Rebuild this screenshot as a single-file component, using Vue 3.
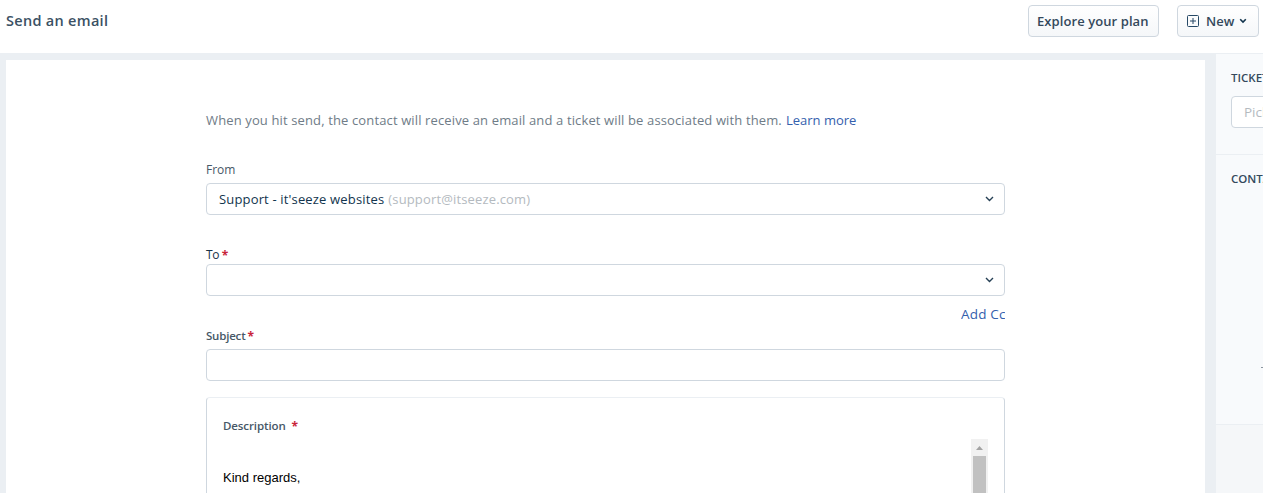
<template>
  <div class="page">
    <!-- Top bar -->
    <header class="topbar">
      <h1 class="topbar-title">Send an email</h1>
      <div class="topbar-actions">
        <button type="button" class="btn btn-plan"><span>Explore your plan</span></button>
        <button type="button" class="btn btn-new">
          <svg class="icon-plus" width="12" height="12" viewBox="0 0 12 12">
            <rect x="0.5" y="0.5" width="11" height="11" rx="1" />
            <path d="M6 3v6M3 6h6" />
          </svg>
          <span class="btn-new-text">New</span>
          <svg class="icon-caret" width="8" height="6" viewBox="0 0 8 6">
            <path d="M1.2 1.2L4 4l2.8-2.8" />
          </svg>
        </button>
      </div>
    </header>

    <div class="workspace">
      <!-- Email form -->
      <main class="panel">
        <form class="form" @submit.prevent>
          <p class="hint">
            <span class="hint-text">When you hit send, the contact will receive an email and a ticket will be associated with them.</span>
            <a class="link">Learn more</a>
          </p>

          <label class="label label-from">From</label>
          <div class="field field-from">
            <span class="sender">{{ sender.name }}</span>
            <span class="address">({{ sender.email }})</span>
            <svg class="icon-chevron" width="9" height="6" viewBox="0 0 9 6">
              <path d="M1 1l3.5 3.5L8 1" />
            </svg>
          </div>

          <label class="label label-to">To <b class="required">*</b></label>
          <div class="field">
            <input v-model="to" type="text" class="field-input" />
            <svg class="icon-chevron" width="9" height="6" viewBox="0 0 9 6">
              <path d="M1 1l3.5 3.5L8 1" />
            </svg>
          </div>
          <div class="add-cc"><a class="link">Add Cc</a></div>

          <label class="label label-subject">Subject<b class="required">*</b></label>
          <div class="field">
            <input v-model="subject" type="text" class="field-input" />
          </div>

          <div class="editor">
            <div class="label label-description">Description <b class="required">*</b></div>
            <div class="editor-area">
              <div class="editor-body">Kind regards,</div>
              <div class="scrollbar">
                <svg class="scroll-up" width="17" height="17" viewBox="0 0 17 17">
                  <path d="M5 11l3.5-4 3.5 4z" />
                </svg>
                <div class="scroll-thumb"></div>
              </div>
            </div>
          </div>
        </form>
      </main>

      <!-- Ticket sidebar -->
      <aside class="sidebar">
        <section class="side-section side-template">
          <h2 class="side-title">TICKET</h2>
          <div class="side-select">Pick</div>
        </section>
        <section class="side-section side-contact">
          <h2 class="side-title">CONTACT</h2>
          <div class="side-dash"></div>
        </section>
        <section class="side-rest"></section>
      </aside>
    </div>
  </div>
</template>

<script setup>
import { ref } from 'vue'

const sender = {
  name: "Support - it'seeze websites",
  email: 'support@itseeze.com'
}

const to = ref('')
const subject = ref('')
</script>

<style>
body {
  margin: 0;
  overflow: hidden;
}
</style>

<style scoped>
.page {
  display: flex;
  flex-direction: column;
  width: 1263px;
  height: 493px;
  overflow: hidden;
  background: #fff;
  color: #183247;
  font-family: "Open Sans", "Noto Sans", sans-serif;
  font-size: 13px;
  line-height: 20px;
}

.page *,
.page {
  box-sizing: border-box;
}

/* Top bar */
.topbar {
  display: flex;
  flex: none;
  justify-content: space-between;
  height: 53px;
  padding: 5px 4px 0 6px;
}

.topbar-title {
  margin: 6px 0 0;
  font-size: 14.5px;
  font-weight: 600;
  line-height: 20px;
  letter-spacing: 0.3px;
  color: #3b5164;
}

.topbar-actions {
  display: flex;
  gap: 18px;
}

.btn {
  display: flex;
  align-items: center;
  height: 32px;
  padding: 0 9px 1px;
  border: 1px solid #cfd7df;
  border-radius: 4px;
  background: linear-gradient(#fff, #f5f7f9);
  color: #34495c;
  font-family: inherit;
  font-size: 13px;
  font-weight: 600;
  line-height: 20px;
  letter-spacing: 0.08px;
  white-space: nowrap;
}

.btn-plan {
  width: 131px;
  padding-left: 8px;
}

.btn-new {
  width: 82px;
}

.btn-new-text {
  width: 29px;
  text-align: left;
}

.icon-plus {
  flex: none;
  margin-right: 7px;
  fill: none;
  stroke: #264966;
  stroke-width: 1;
}

.icon-caret {
  flex: none;
  margin-left: 4px;
  fill: none;
  stroke: #12344d;
  stroke-width: 1.6;
}

/* Form */
.workspace {
  display: flex;
  flex: 1;
  min-height: 0;
  background: #ebeff3;
}

.panel {
  flex: none;
  width: 1199px;
  margin: 7px 11px 0 6px;
  padding: 50px 200px 0;
  overflow: hidden;
  background: #fff;
}

.form {
  width: 799px;
}

.hint {
  display: flex;
  gap: 4px;
  margin: 0;
  line-height: 20px;
  color: #6f7c87;
  white-space: nowrap;
}

.hint-text {
  letter-spacing: 0.13px;
}

.link {
  color: #3460ad;
}

.label {
  display: block;
  font-size: 12px;
  line-height: 16px;
  color: #475867;
}

.label-from {
  margin: 32px 0 5px;
}

.label-to {
  margin: 32px 0 1px;
  color: #183247;
  letter-spacing: -0.4px;
}

.label-subject {
  margin: 4px 0 5px;
  font-size: 11.5px;
  font-weight: 600;
  letter-spacing: -0.2px;
}

.label-subject .required {
  margin-left: 2px;
}

.required {
  color: #c8243a;
  font-size: 12px;
  font-weight: 700;
  line-height: 1;
  vertical-align: -1px;
}

.field {
  display: flex;
  align-items: center;
  height: 32px;
  padding: 0 10px 0 12px;
  border: 1px solid #cfd7df;
  border-radius: 4px;
  background: #fff;
}

.sender {
  letter-spacing: 0.16px;
  color: #12344d;
}

.address {
  margin-left: 4px;
  letter-spacing: 0.15px;
  color: #b4bac0;
}

.field-input {
  flex: 1;
  min-width: 0;
  padding: 0;
  border: 0;
  outline: 0;
  background: transparent;
  font: inherit;
}

.icon-chevron {
  flex: none;
  margin-left: auto;
  fill: none;
  stroke: #264055;
  stroke-width: 1.4;
}

.add-cc {
  display: flex;
  width: 44px;
  height: 20px;
  margin: 8px 0 0 755px;
  overflow: hidden;
  font-size: 13.5px;
  letter-spacing: 0.2px;
  white-space: nowrap;
}

/* Description editor */
.editor {
  height: 240px;
  margin-top: 16px;
  padding: 20px 16px 0;
  border: 1px solid #cfd7df;
  border-top-color: #ebeff3;
  border-radius: 4px;
}

.label-description {
  font-size: 11.5px;
  font-weight: 600;
  letter-spacing: -0.1px;
  white-space: pre;
}

.label-description .required {
  margin-left: 3px;
}

.editor-area {
  display: flex;
  justify-content: space-between;
  margin-top: 5px;
}

.editor-body {
  padding-top: 29px;
  color: #000;
  font-family: "Liberation Sans", Arial, sans-serif;
  font-size: 13px;
}

.scrollbar {
  width: 17px;
  height: 190px;
  background: #f1f1f1;
}

.scroll-up {
  display: block;
  fill: #a3a3a3;
}

.scroll-thumb {
  width: 13px;
  height: 120px;
  margin-left: 2px;
  background: #c1c1c1;
}

/* Sidebar */
.sidebar {
  display: flex;
  flex: none;
  flex-direction: column;
  width: 240px;
  margin-top: 1px;
  background: #f8fafc;
}

.side-section {
  padding: 14px 0 0 15px;
  border-bottom: 1px solid #ebeff3;
}

.side-template {
  height: 101px;
}

.side-contact {
  height: 270px;
}

.side-title {
  margin: 0;
  font-size: 11.5px;
  font-weight: 600;
  line-height: 20px;
  color: #34495c;
}

.side-select {
  height: 32px;
  margin-top: 8px;
  padding: 5px 12px;
  border: 1px solid #cfd7df;
  border-radius: 4px;
  background: #fff;
  color: #b4bac0;
  font-size: 13.5px;
}

.side-dash {
  width: 8px;
  height: 1px;
  margin: 178px 0 0 30px;
  background: #8c969f;
}

.side-rest {
  flex: 1;
  background: #f5f7f9;
}
</style>
